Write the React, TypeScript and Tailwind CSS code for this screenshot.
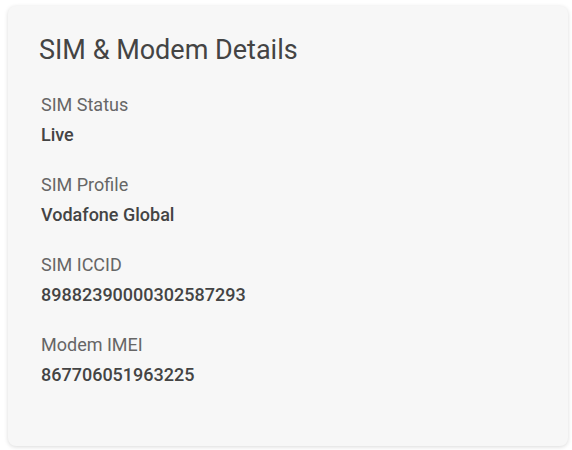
import React from 'react';

const details = [
  { label: 'SIM Status', value: 'Live' },
  { label: 'SIM Profile', value: 'Vodafone Global' },
  { label: 'SIM ICCID', value: '89882390000302587293' },
  { label: 'Modem IMEI', value: '867706051963225' },
];

export default function App() {
  return (
    <div className="min-h-screen bg-white px-2 pt-[6px] pb-1" style={{ fontFamily: 'Roboto, sans-serif' }}>
      {/* Card */}
      <div className="w-[560px] h-[440px] bg-[#f7f7f7] rounded-lg shadow-[0_1px_4px_rgba(0,0,0,0.15)] pt-[26px]">
        <h2 className="pl-[31px] text-[27px] leading-9 font-normal text-[#444444]">
          SIM &amp; Modem Details
        </h2>
        <div className="pl-[33px] pt-[23px] flex flex-col gap-[23px]">
          {details.map((d) => (
            <div key={d.label}>
              <div className="text-[18px] leading-[27px] text-[#666666]">{d.label}</div>
              <div className="mt-[3px] text-[18px] leading-[27px] font-medium text-[#444444]">{d.value}</div>
            </div>
          ))}
        </div>
      </div>
    </div>
  );
}
